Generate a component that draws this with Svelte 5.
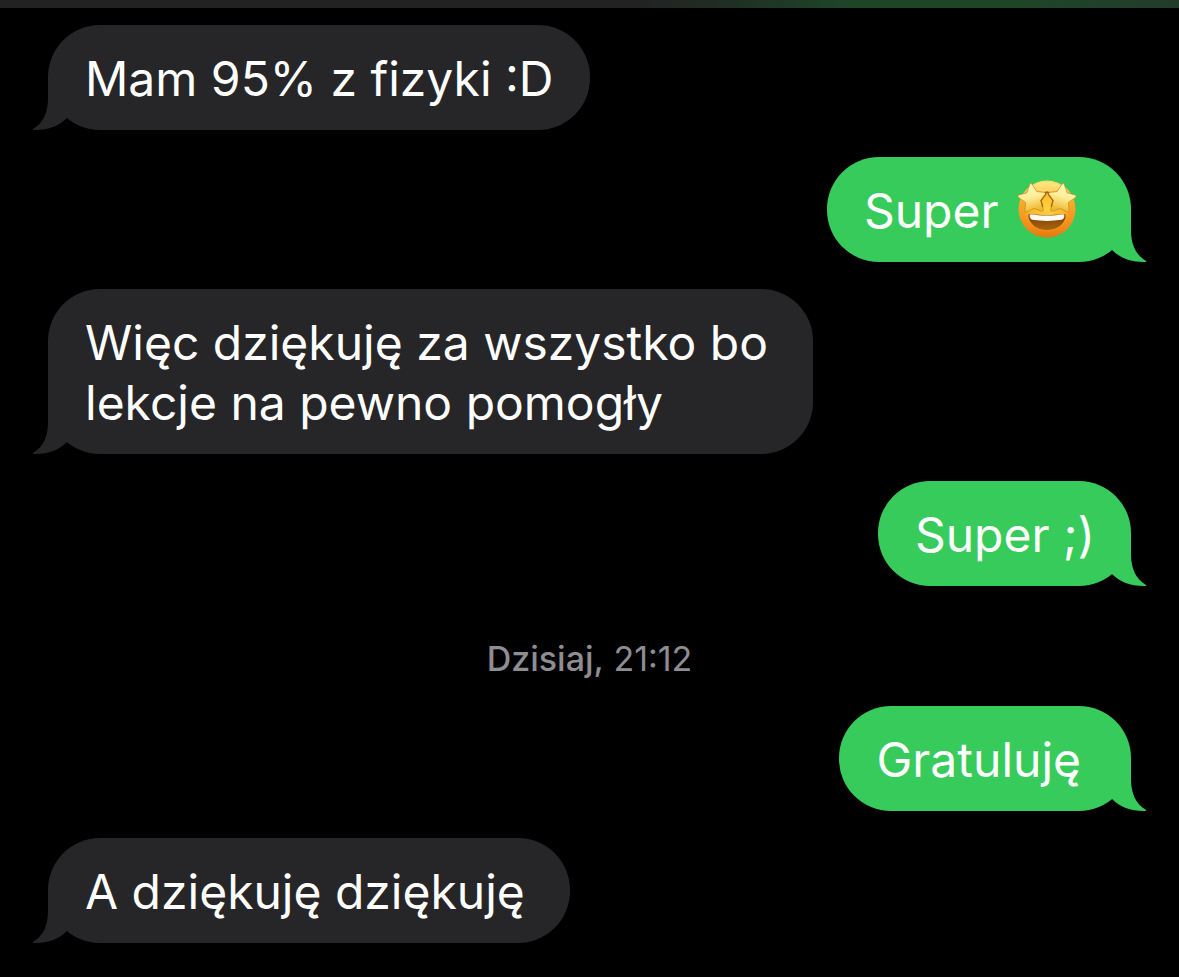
<script lang="ts">
  type Message = {
    from: "them" | "me";
    text: string;
    emoji?: boolean;
    trailing?: boolean; // typed with a space at the end
  };

  const earlier: Message[] = [
    { from: "them", text: "Mam 95% z fizyki :D" },
    { from: "me", text: "Super", emoji: true, trailing: true },
    {
      from: "them",
      text: "Więc dziękuję za wszystko bo lekcje na pewno pomogły",
      trailing: true,
    },
    { from: "me", text: "Super ;)" },
  ];

  const today: Message[] = [
    { from: "me", text: "Gratuluję", trailing: true },
    { from: "them", text: "A dziękuję dziękuję", trailing: true },
  ];
</script>

{#snippet starEyes()}
  <svg class="emoji" viewBox="0 0 60 60" role="img" aria-label="🤩">
    <defs>
      <linearGradient id="face" x1="0" y1="0" x2="0" y2="1">
        <stop offset="0" stop-color="#ffe064" />
        <stop offset="0.4" stop-color="#f9a928" />
        <stop offset="0.8" stop-color="#f28c1a" />
        <stop offset="1" stop-color="#e47a10" />
      </linearGradient>
      <radialGradient id="glow" cx="0.5" cy="0.5" r="0.5">
        <stop offset="0" stop-color="#ffd23e" />
        <stop offset="0.75" stop-color="#fbb92c" stop-opacity="0.8" />
        <stop offset="1" stop-color="#f9a51e" stop-opacity="0" />
      </radialGradient>
      <linearGradient id="star" x1="0" y1="0" x2="0.3" y2="1">
        <stop offset="0" stop-color="#fff9c4" />
        <stop offset="0.55" stop-color="#ffef9c" />
        <stop offset="1" stop-color="#eeba34" />
      </linearGradient>
      <linearGradient id="mouth" x1="0" y1="0" x2="0" y2="1">
        <stop offset="0" stop-color="#7a3d08" />
        <stop offset="1" stop-color="#a8660f" />
      </linearGradient>
      <path
        id="eye"
        d="M12.9 5 Q13.8 3.6 14.9 5 L19.9 12.6 L28 13.4 Q29.8 14 28.4 15.6 L24 21.6 L26.3 30.6 Q26.4 32.6 24.4 32.2 L16.8 29.4 L9.9 33 Q7.8 33.6 8 31.6 L8.6 23.4 L1.2 18.3 Q0 16.8 1.8 16 L9.8 13.8 Z"
      />
    </defs>
    <circle cx="30" cy="30" r="28.5" fill="url(#face)" />
    <ellipse cx="30" cy="29" rx="25" ry="24" fill="url(#glow)" />
    <ellipse cx="30" cy="8" rx="14" ry="5" fill="#fff0a0" opacity="0.5" />
    <path
      d="M13 35 C22 36.5 38 36.5 47 35 C48.7 35 49 37 48.2 39.5 C46 46.5 38.5 51 30 51 C21.5 51 14 46.5 11.8 39.5 C11 37 11.3 35 13 35 Z"
      fill="url(#mouth)"
    />
    <path
      d="M13.8 35.3 C23 36.9 37 36.9 46.2 35.3 Q48 35.5 47.2 38.1 Q46.5 40.5 44.5 40.8 C35 42.3 25 42.3 15.5 40.8 Q13.5 40.5 12.8 38.1 Q12 35.5 13.8 35.3 Z"
      fill="#fffaf2"
    />
    <g fill="url(#star)" stroke="#c8861c" stroke-width="0.7">
      <use href="#eye" />
      <use href="#eye" transform="matrix(-1 0 0 1 60 0)" />
    </g>
    <path
      d="M25.8 28 L24 21.6 L28.6 15.4 Q29.4 14 28.4 13.4 L30 13 L31.6 13.4 Q30.6 14 31.4 15.4 L36 21.6 L34.2 28"
      fill="none"
      stroke="#a9630e"
      stroke-width="1.3"
      stroke-linejoin="round"
    />
  </svg>
{/snippet}

{#snippet bubble(message: Message)}
  <li
    class="bubble {message.from}"
    class:trailing={message.trailing}
    class:with-emoji={message.emoji}
  >
    <p>{message.text}{#if message.emoji}{" "}{@render starEyes()}{/if}</p>
    <svg class="tail" viewBox="0 0 52 52" aria-hidden="true">
      <path
        d="M16 0 V20 C16 35 11 45 1 51 Q0 52 3 52 C17 52 27 48 35 40 L52 20 V0 Z"
      />
    </svg>
  </li>
{/snippet}

<div class="header-edge"></div>

<main>
  <ol>
    {#each earlier as message}
      {@render bubble(message)}
    {/each}
  </ol>
  <time datetime="21:12"><b>Dzisiaj,</b> 21:12</time>
  <ol>
    {#each today as message}
      {@render bubble(message)}
    {/each}
  </ol>
</main>

<style>
  :global(body) {
    background: #000;
  }

  .header-edge {
    height: 8px;
    background: linear-gradient(
      to right,
      #222223 54%,
      #1f2f23 62%,
      #1e4528 72%,
      #1e4528 86%,
      #233c2a 100%
    );
  }

  main {
    display: flex;
    flex-direction: column;
    gap: 27px;
    padding: 17px 48px 34px;
    font-family: Inter, "Noto Sans", sans-serif;
  }

  ol {
    display: flex;
    flex-direction: column;
    gap: 27px;
    margin: 0;
    padding: 0;
    list-style: none;
  }

  .bubble {
    --fill: #262628;
    position: relative;
    box-sizing: border-box;
    max-width: 765px;
    padding: 24px 36px 21px 37px;
    border-radius: 52px;
    background: var(--fill);
    color: #fff;
    font-size: 48px;
    line-height: 60px;
  }

  .them {
    align-self: flex-start;
  }

  .me {
    --fill: #37cb5b;
    align-self: flex-end;
  }

  .trailing {
    padding-right: 45px;
  }

  .me.trailing {
    padding-right: 50px;
  }

  .me.with-emoji {
    padding-right: 54px;
  }

  p {
    margin: 0;
  }

  /* hangs outside the bottom corner of the bubble */
  .tail {
    position: absolute;
    bottom: 0;
    left: -16px;
    width: 52px;
    height: 52px;
    fill: var(--fill);
  }

  .me .tail {
    right: -16px;
    left: auto;
    transform: scaleX(-1);
  }

  .emoji {
    width: 60px;
    height: 60px;
    margin: -4px 0 -4px 5px;
    vertical-align: -7px;
  }

  time {
    padding-top: 26px;
    color: #8d8d92;
    font-size: 34px;
    line-height: 40px;
    text-align: center;
  }

  time b {
    font-weight: 500;
  }
</style>
